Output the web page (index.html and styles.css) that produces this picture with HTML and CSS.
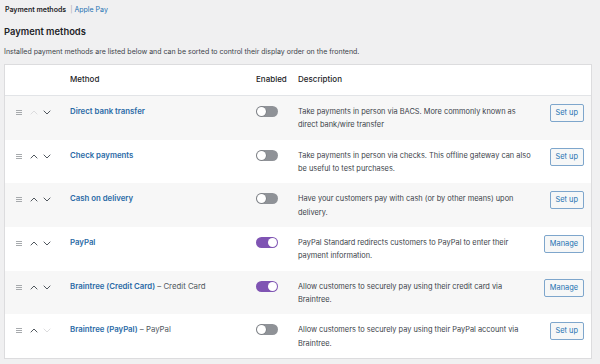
FILE: index.html
```html
<!DOCTYPE html>
<html lang="en">
<head>
<meta charset="utf-8">
<title>Payment methods</title>
<link rel="stylesheet" href="styles.css">
</head>
<body>
<div class="page">
  <nav class="subnav"><span class="current">Payment methods</span><span class="sep">|</span><a href="#" class="link">Apple Pay</a></nav>
  <h2 class="title">Payment methods</h2>
  <p class="intro">Installed payment methods are listed below and can be sorted to control their display order on the frontend.</p>

  <div class="table">
    <div class="row head">
      <div class="c sort"></div>
      <div class="c name">Method</div>
      <div class="c status">Enabled</div>
      <div class="c desc">Description</div>
      <div class="c action"></div>
    </div>

    <div class="row alt">
      <div class="c sort"><span class="handle"><i></i><i></i><i></i></span><svg class="chev off" viewBox="0 0 8 5"><polyline points="0.7,4.3 4,1 7.3,4.3"/></svg><svg class="chev" viewBox="0 0 8 5"><polyline points="0.7,0.7 4,4 7.3,0.7"/></svg></div>
      <div class="c name"><a href="#" class="gw">Direct bank transfer</a></div>
      <div class="c status"><span class="toggle"></span></div>
      <div class="c desc">Take payments in person via BACS. More commonly known as direct bank/wire transfer</div>
      <div class="c action"><a href="#" class="btn">Set up</a></div>
    </div>

    <div class="row">
      <div class="c sort"><span class="handle"><i></i><i></i><i></i></span><svg class="chev" viewBox="0 0 8 5"><polyline points="0.7,4.3 4,1 7.3,4.3"/></svg><svg class="chev" viewBox="0 0 8 5"><polyline points="0.7,0.7 4,4 7.3,0.7"/></svg></div>
      <div class="c name"><a href="#" class="gw">Check payments</a></div>
      <div class="c status"><span class="toggle"></span></div>
      <div class="c desc">Take payments in person via checks. This offline gateway can also be useful to test purchases.</div>
      <div class="c action"><a href="#" class="btn">Set up</a></div>
    </div>

    <div class="row alt">
      <div class="c sort"><span class="handle"><i></i><i></i><i></i></span><svg class="chev" viewBox="0 0 8 5"><polyline points="0.7,4.3 4,1 7.3,4.3"/></svg><svg class="chev" viewBox="0 0 8 5"><polyline points="0.7,0.7 4,4 7.3,0.7"/></svg></div>
      <div class="c name"><a href="#" class="gw">Cash on delivery</a></div>
      <div class="c status"><span class="toggle"></span></div>
      <div class="c desc">Have your customers pay with cash (or by other means) upon delivery.</div>
      <div class="c action"><a href="#" class="btn">Set up</a></div>
    </div>

    <div class="row">
      <div class="c sort"><span class="handle"><i></i><i></i><i></i></span><svg class="chev" viewBox="0 0 8 5"><polyline points="0.7,4.3 4,1 7.3,4.3"/></svg><svg class="chev" viewBox="0 0 8 5"><polyline points="0.7,0.7 4,4 7.3,0.7"/></svg></div>
      <div class="c name"><a href="#" class="gw">PayPal</a></div>
      <div class="c status"><span class="toggle on"></span></div>
      <div class="c desc">PayPal Standard redirects customers to PayPal to enter their payment information.</div>
      <div class="c action"><a href="#" class="btn">Manage</a></div>
    </div>

    <div class="row alt">
      <div class="c sort"><span class="handle"><i></i><i></i><i></i></span><svg class="chev" viewBox="0 0 8 5"><polyline points="0.7,4.3 4,1 7.3,4.3"/></svg><svg class="chev" viewBox="0 0 8 5"><polyline points="0.7,0.7 4,4 7.3,0.7"/></svg></div>
      <div class="c name"><a href="#" class="gw">Braintree (Credit Card)</a><span class="sub"> – Credit Card</span></div>
      <div class="c status"><span class="toggle on"></span></div>
      <div class="c desc">Allow customers to securely pay using their credit card via Braintree.</div>
      <div class="c action"><a href="#" class="btn">Manage</a></div>
    </div>

    <div class="row">
      <div class="c sort"><span class="handle"><i></i><i></i><i></i></span><svg class="chev" viewBox="0 0 8 5"><polyline points="0.7,4.3 4,1 7.3,4.3"/></svg><svg class="chev off" viewBox="0 0 8 5"><polyline points="0.7,0.7 4,4 7.3,0.7"/></svg></div>
      <div class="c name"><a href="#" class="gw">Braintree (PayPal)</a><span class="sub"> – PayPal</span></div>
      <div class="c status"><span class="toggle"></span></div>
      <div class="c desc">Allow customers to securely pay using their PayPal account via Braintree.</div>
      <div class="c action"><a href="#" class="btn">Set up</a></div>
    </div>
  </div>
</div>
</body>
</html>
```

FILE: styles.css
```css
* { box-sizing: border-box; }
html, body { margin: 0; padding: 0; }
body {
  background: #f0f0f1;
  font-family: Inter, "Noto Sans", "Liberation Sans", sans-serif;
  color: #3c434a;
  width: 600px;
  height: 364px;
  overflow: hidden;
}
.page { padding: 4px 8px 0 4px; }

.subnav {
  font-size: 7px;
  line-height: 11px;
  height: 11px;
  padding-left: 1px;
  display: flex;
  align-items: center;
}
.subnav .current { color: #1d2327; font-weight: 600; }
.subnav .sep { color: #a7aaad; margin: 0 2px 0 4px; }
.link { color: #2271b1; text-decoration: none; }

.title {
  margin: 10px 0 0 0;
  font-size: 9.4px;
  line-height: 14px;
  font-weight: 600;
  color: #1d2327;
}
.intro {
  margin: 7px 0 0 0;
  font-size: 7px;
  line-height: 12px;
  color: #3c434a;
}

.table {
  margin-top: 6px;
  background: #fff;
  border: 1px solid #dcdcde;
}
.row {
  display: grid;
  grid-template-columns: 65px 182px 46px 240px 1fr;
  height: 43.7px;
  font-size: 7.4px;
  line-height: 13.4px;
}
.row.alt { background: #f7f7f7; }
.row.head {
  height: 31px;
  align-items: center;
  background: #fff;
  border-bottom: 1px solid #e2e4e7;
  color: #1d2327;
  font-weight: 500;
  font-size: 8px;
}
.row:not(.head) .c { padding-top: 9px; }

.sort {
  display: flex;
  align-items: flex-start;
  padding-left: 11px;
}
.row:not(.head) .sort { padding-top: 14px; }
.handle {
  display: flex;
  flex-direction: column;
  gap: 1px;
  width: 6px;
}
.handle i {
  display: block;
  height: 1px;
  background: #a7aaad;
}
.chev {
  width: 8px;
  height: 5px;
  margin-left: 5px;
  fill: none;
  stroke: #50575e;
  stroke-width: 1;
}
.chev:first-of-type { margin-left: 8px; }
.chev.off { stroke: #dcdcde; }

.gw { color: #2a6aa6; text-decoration: none; font-weight: 600; font-size: 7.8px; }
.sub { color: #50575e; font-weight: 400; font-size: 7.8px; }

.status { display: flex; align-items: flex-start; padding-left: 4px; }
.row:not(.head) .status { padding-top: 10px; }
.toggle {
  position: relative;
  display: block;
  width: 22px;
  height: 11px;
  border-radius: 6px;
  background: #8f9297;
}
.toggle::after {
  content: "";
  position: absolute;
  top: 1px;
  left: 1px;
  width: 9px;
  height: 9px;
  border-radius: 50%;
  background: #fff;
  box-shadow: 0 0 0 0.5px #6f7378;
}
.toggle.on { background: #7f54b3; }
.toggle.on::after { left: 12px; box-shadow: none; }

.desc { color: #3c434a; padding-right: 4px; }
.row.head .desc { color: #1d2327; }

.action { display: flex; justify-content: flex-end; padding-right: 7px; }
.row:not(.head) .action { padding-top: 8px; }
.btn {
  display: inline-block;
  height: 18px;
  line-height: 16px;
  padding: 0 5px;
  font-size: 7.4px;
  color: #2271b1;
  background: #f6f7f7;
  border: 1px solid #7ea6cc;
  border-radius: 2px;
  text-decoration: none;
}
```
